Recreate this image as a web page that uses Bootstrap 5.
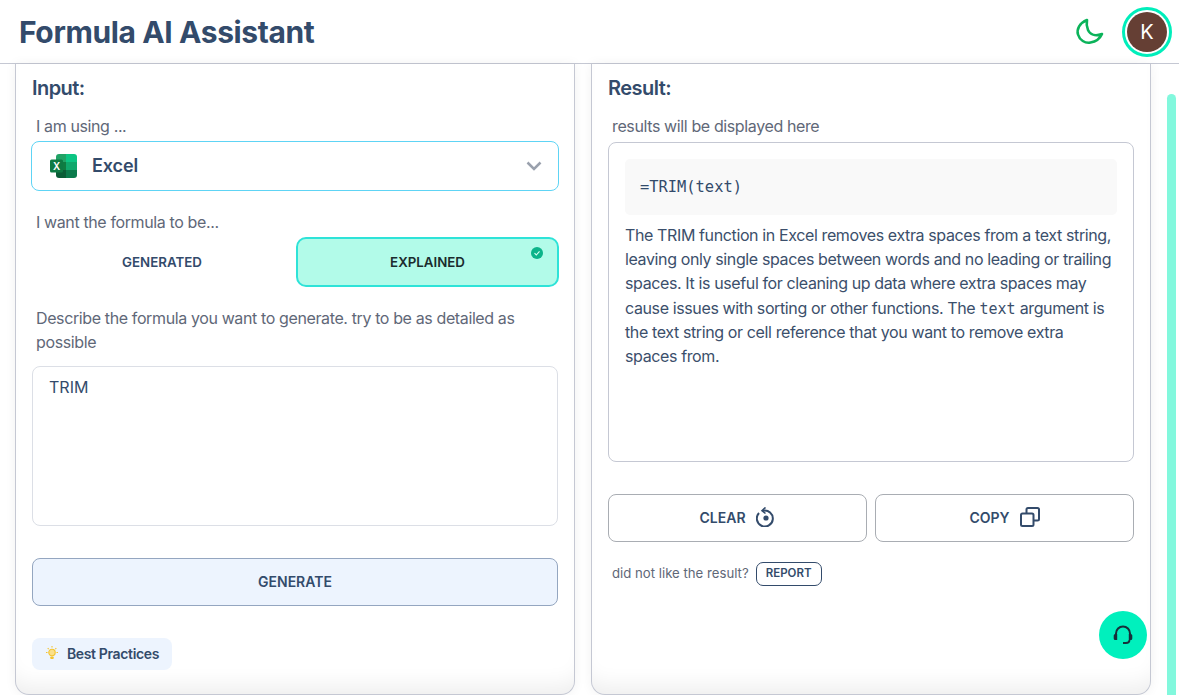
<!DOCTYPE html>
<html lang="en">
<head>
<meta charset="utf-8">
<title>Formula AI Assistant</title>
<link href="https://cdn.jsdelivr.net/npm/bootstrap@5.3.0/dist/css/bootstrap.min.css" rel="stylesheet">
<style>
html,body{height:695px;overflow:hidden}
body{font-family:Inter,"Liberation Sans",sans-serif;color:#334b6b;background:#fff;position:relative}
.top-bar{height:64px;border-bottom:1px solid #c5c8d3;padding:0 7px 0 19px}
.app-title{font-size:30px;font-weight:700;line-height:1;color:#334b6b;margin:0;letter-spacing:-.38px}
.moon-ico{width:30px;height:30px;margin-right:17px}
.avatar-ring{width:50px;height:50px;border-radius:50%;border:3px solid #00eebb;padding:2px;background:#fff}
.avatar-core{width:100%;height:100%;border-radius:50%;background:#653f34;color:#fff;font-size:20px;line-height:1}
.work-area{padding:0 28px 0 15px;gap:16px;height:631px}
.side-panel{width:560px;height:631px;border:1px solid #c5c8d3;border-top:0;border-radius:0 0 14px 14px;padding:12px 16px 0;background:#fff;box-shadow:inset 0 -22px 22px -14px rgba(0,0,0,.07),0 0 12px rgba(0,0,0,.06)}
.panel-head{font-size:20px;font-weight:600;line-height:24px;margin:0 0 14px;color:#334b6b;letter-spacing:-.55px}
.field-label{font-size:16px;line-height:24px;color:#5f6878;padding-left:4px;margin:0;letter-spacing:-.38px}
.picker{height:50px;margin:3px -1px 0;border:1px solid #5ed4f5;border-radius:8px;padding:0 16px 0 18px}
.picker-name{font-size:18px;font-weight:600;margin-left:15px;color:#334b6b;letter-spacing:-.1px;padding-bottom:2px}
.mode-row{gap:4px;margin:3px -1px 0 0}
.mode-btn{flex:1 1 0;height:50px;font-size:13.3px;font-weight:600;text-transform:uppercase;border:0;background:transparent;color:#334b6b;border-radius:10px;position:relative;padding:2px 0 0}
.mode-on{border:2px solid #2ee3d8;background:#b2fbe9;color:#1a2c2e;flex:0 0 263px}
.check-dot{position:absolute;top:8px;right:14px;width:12px;height:12px}
.prompt-box{height:160px;border:1px solid #dcdfe6;border-radius:8px;padding:8px 16px;font-size:16px;line-height:24px;margin-top:12px}
.gen-btn{height:48px;margin-top:32px;background:#edf4fe;border:1px solid #94a6c0;border-radius:8px;color:#334b6b;font-size:14px;font-weight:600;width:100%;padding:0 0 2px}
.tips-chip{margin-top:32px;width:140px;height:32px;background:#edf4fe;border-radius:8px;font-size:14px;font-weight:600;color:#334b6b;padding:0 0 2px 13px;gap:8px;letter-spacing:-.36px}
.result-box{height:320px;border:1px solid #c5c8d3;border-radius:8px;padding:16px;margin-top:4px;font-size:16px;line-height:24.2px}
.code-strip{height:56px;background:#f9f9f9;border-radius:5px;padding:0 15px;font-family:"DejaVu Sans Mono","Liberation Mono",monospace;font-size:15.4px;color:#334b6b}
.result-text{margin:8px 0 0;color:#3b4f6b;letter-spacing:-.38px}
.result-text code{font-family:"DejaVu Sans Mono","Liberation Mono",monospace;font-size:15px;line-height:1;color:#3b4f6b;letter-spacing:0}
.act-row{gap:8px;margin-top:32px}
.act-btn{flex:1 1 0;height:48px;border:1px solid #a9adb3;border-radius:8px;background:#fff;color:#334b6b;font-size:14px;font-weight:600;gap:10px;padding:0 0 2px}
.report-line{margin-top:20px;font-size:13.2px;color:#5f6878;padding-left:4px;gap:7px}
.report-btn{width:66px;height:24px;border:1.500px solid #334b6b;border-radius:7px;background:#fff;font-size:11.5px;font-weight:600;color:#334b6b;padding:0}
.help-fab{position:absolute;left:1099px;top:611px;width:48px;height:48px;border-radius:50%;background:#00f0bd;border:0;padding:0}
.scroll-thumb{position:absolute;left:1167px;top:94px;width:9px;height:601px;background:#82f8dd;border-radius:5px 5px 0 0}
</style>
</head>
<body>
<header class="top-bar d-flex align-items-center justify-content-between">
  <h1 class="app-title">Formula AI Assistant</h1>
  <div class="d-flex align-items-center">
    <svg class="moon-ico" viewBox="0 0 30 30" fill="none" stroke="#0bb35a" stroke-width="2.600" stroke-linejoin="round"><path d="M12 3C4.500 6 1.500 12 3 17.500c1.600 5.600 7 9 12.500 8 5-.8 9.300-3.600 11.500-8.500C20 19.500 15 17.500 13 13c-1.300-3-1.600-6.800-1-10z"/></svg>
    <div class="avatar-ring"><div class="avatar-core d-flex align-items-center justify-content-center">K</div></div>
  </div>
</header>
<main class="work-area d-flex">
  <section class="side-panel">
    <h2 class="panel-head">Input:</h2>
    <p class="field-label">I am using ...</p>
    <div class="picker d-flex align-items-center">
      <svg width="27" height="24" viewBox="0 0 27 24"><path fill="#0cc583" d="M16 0h8a3 3 0 0 1 3 3v5H16z"/><path fill="#10a86c" d="M16 8h11v8H16z"/><path fill="#0b7a4b" d="M16 16h11v5a3 3 0 0 1-3 3h-8z"/><path fill="#107c41" d="M6 8h10v8H6z"/><path fill="#0a5c36" d="M6 16h10v8H9a3 3 0 0 1-3-3z"/><path fill="#21a366" d="M6 3a3 3 0 0 1 3-3h7v8H6z"/><rect x="0" y="5.500" width="13" height="13" rx="1.500" fill="#0d7a43"/><text x="6.500" y="15.500" text-anchor="middle" font-family="Inter,sans-serif" font-size="10" font-weight="600" fill="#fff">X</text></svg>
      <span class="picker-name flex-grow-1">Excel</span>
      <svg width="16" height="10" viewBox="0 0 16 10" fill="none" stroke="#9aa1ad" stroke-width="2.500"><path d="M1.500 1.500 8 8l6.500-6.500"/></svg>
    </div>
    <p class="field-label" style="margin-top:19px">I want the formula to be...</p>
    <div class="mode-row d-flex">
      <button class="mode-btn" type="button">Generated</button>
      <button class="mode-btn mode-on" type="button">Explained
        <svg class="check-dot" viewBox="0 0 12 12"><circle cx="6" cy="6" r="6" fill="#0cb48a"/><path d="M3.500 6.200 5.300 8l3.200-3.600" fill="none" stroke="#d9fff3" stroke-width="1.100"/></svg>
      </button>
    </div>
    <p class="field-label" style="margin-top:19px">Describe the formula you want to generate. try to be as detailed as possible</p>
    <div class="prompt-box">TRIM</div>
    <button class="gen-btn d-block" type="button">GENERATE</button>
    <div class="tips-chip d-flex align-items-center">
      <svg width="14" height="14" viewBox="0 0 14 14"><g stroke="#f4c430" stroke-width="1.100" fill="none"><path d="M7 0v1.500M1 6.500h1.500M11.500 6.500H13M2.700 2.200l1 1M11.300 2.200l-1 1"/><circle cx="7" cy="6.500" r="3.200" fill="#fbe08a"/></g><rect x="5.300" y="10.500" width="3.400" height="2.500" rx=".8" fill="#f4c430"/></svg>
      <span>Best Practices</span>
    </div>
  </section>
  <section class="side-panel">
    <h2 class="panel-head">Result:</h2>
    <p class="field-label">results will be displayed here</p>
    <div class="result-box">
      <div class="code-strip d-flex align-items-center">=TRIM(text)</div>
      <p class="result-text">The TRIM function in Excel removes extra spaces from a text string, leaving only single spaces between words and no leading or trailing spaces. It is useful for cleaning up data where extra spaces may cause issues with sorting or other functions. The <code>text</code> argument is the text string or cell reference that you want to remove extra spaces from.</p>
    </div>
    <div class="act-row d-flex">
      <button class="act-btn d-flex align-items-center justify-content-center" type="button">CLEAR
        <svg width="20" height="20" viewBox="0 0 20 20" fill="none" stroke="#334b6b" stroke-width="2"><path d="M7 3.700A8 8 0 1 1 3 6"/><path d="M9.500 .5 6 3.700l3.500 2.800" stroke-width="1.600"/><circle cx="10" cy="11" r="2.600" fill="#334b6b" stroke="none"/></svg>
      </button>
      <button class="act-btn d-flex align-items-center justify-content-center" type="button">COPY
        <svg width="20" height="20" viewBox="0 0 20 20" fill="none" stroke="#334b6b" stroke-width="2" stroke-linejoin="round"><rect x="1" y="6.500" width="12.500" height="12.500" rx="1.500"/><path d="M6.500 6.500V2.500A1.500 1.500 0 0 1 8 1h9.500A1.500 1.500 0 0 1 19 2.500V12a1.500 1.500 0 0 1-1.500 1.500h-4"/></svg>
      </button>
    </div>
    <div class="report-line d-flex align-items-center">
      <span>did not like the result?</span>
      <button class="report-btn" type="button">REPORT</button>
    </div>
  </section>
</main>
<button class="help-fab d-flex align-items-center justify-content-center" type="button" aria-label="Support">
  <svg width="22" height="22" viewBox="0 0 22 22" fill="none" stroke="#17303a" stroke-width="2"><path d="M4 12V9.500a7 7 0 0 1 14 0V12"/><path fill="#17303a" stroke="none" d="M3.200 10h2v6h-2a1.500 1.500 0 0 1-1.500-1.500v-3A1.500 1.500 0 0 1 3.200 10zM16.800 10h2a1.500 1.500 0 0 1 1.500 1.500v3a1.500 1.500 0 0 1-1.500 1.500h-2z"/><path d="M17.500 16c0 2-1.500 3-3.500 3h-3" stroke-width="1.800"/></svg>
</button>
<div class="scroll-thumb"></div>
<script src="https://cdn.jsdelivr.net/npm/bootstrap@5.3.0/dist/js/bootstrap.bundle.min.js"></script>
</body>
</html>
